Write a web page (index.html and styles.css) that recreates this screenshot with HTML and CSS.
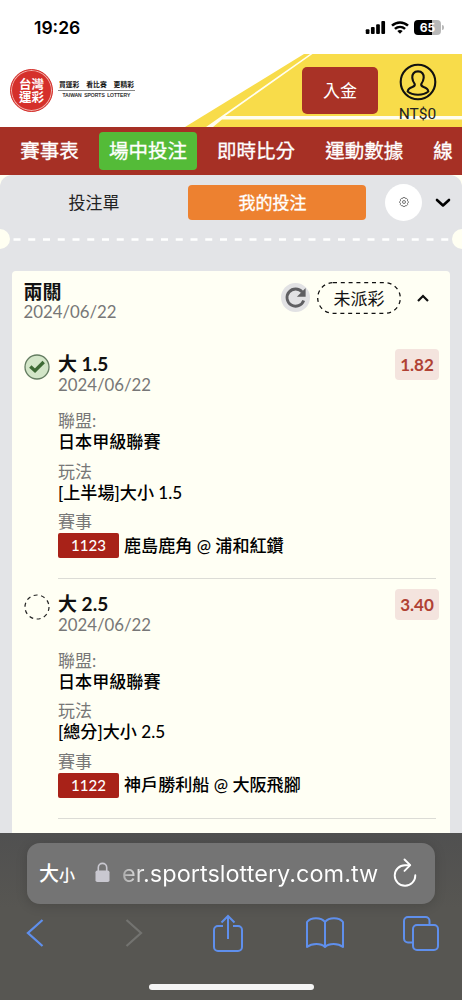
FILE: index.html
```html
<!DOCTYPE html>
<html lang="zh-Hant">
<head>
    <meta charset="UTF-8">
    <meta name="viewport" content="width=device-width, initial-scale=1.0">
    <title>台灣運彩</title>
    <link rel="stylesheet" href="styles.css">
</head>
<body>
    <!-- Phone status bar -->
    <div class="status-bar">
        <span class="clock">19:26</span>
        <div class="status-icons">
            <svg width="21" height="13" viewBox="0 0 21 14">
                <rect x="0" y="9" width="4" height="5" rx="1"/>
                <rect x="5.6" y="6.5" width="4" height="7.5" rx="1"/>
                <rect x="11.2" y="3.5" width="4" height="10.5" rx="1"/>
                <rect x="16.8" y="0" width="4" height="14" rx="1"/>
            </svg>
            <svg width="18" height="13" viewBox="0 0 18 13" fill="none" stroke="#000" stroke-width="2.5">
                <path d="M1 4.6C5.6 .3 12.4 .3 17 4.6"/>
                <path d="M3.9 7.9c3-2.7 7.2-2.7 10.2 0"/>
                <path d="M6.3 10 9 12.8 11.7 10C10.2 8.700 7.800 8.700 6.300 10z" fill="#000" stroke="none"/>
            </svg>
            <div class="battery"><span>65</span></div>
        </div>
    </div>

    <!-- Site header -->
    <header class="site-header">
        <svg class="header-bg" width="462" height="73" viewBox="0 0 462 73">
            <path d="M304 0H462V73H185z" fill="#f8dc4a"/>
            <path d="M310 0H312.500L225 62H462V65.500H222L213 73H206z" fill="#fffef0"/>
        </svg>
        <div class="brand">
            <div class="brand-mark"><span>台灣</span><span>運彩</span></div>
            <div class="brand-text">
                <p class="slogan"><span>買運彩</span><span>看比賽</span><span>更精彩</span></p>
                <p class="brand-en">TAIWAN SPORTS LOTTERY</p>
            </div>
        </div>
        <div class="account">
            <button class="deposit-btn">入金</button>
            <div class="user">
                <svg width="38" height="38" viewBox="0 0 38 38" fill="none" stroke="#111" stroke-width="2.1">
                    <circle cx="19" cy="19" r="17.300"/>
                    <path d="M19 8.400c-4 0-6 2.800-5.700 6.400.2 3 1.300 4.600 2.400 6.200.5 1.600-.6 2.300-2.300 2.900-3.200 1.100-4.600 2.300-4.700 4.600C11.500 31 15 31.700 19 31.700s7.500-.7 10.300-3.200c-.1-2.300-1.500-3.500-4.700-4.600-1.700-.6-2.800-1.300-2.300-2.900 1.100-1.600 2.200-3.200 2.400-6.200.3-3.600-1.700-6.400-5.700-6.400z"/>
                </svg>
                <span class="balance">NT$0</span>
            </div>
        </div>
    </header>

    <nav class="main-nav">
        <a>賽事表</a>
        <a class="active">場中投注</a>
        <a>即時比分</a>
        <a>運動數據</a>
        <a>線</a>
    </nav>

    <main class="bets-page">
        <div class="bets-panel">
            <div class="tabs">
                <span class="tab">投注單</span>
                <span class="tab selected">我的投注</span>
                <span class="settings">
                    <svg width="10" height="10" viewBox="0 0 10 10" fill="none" stroke="#555" stroke-width=".8">
                        <path d="M3.900.6h2.200l.4 1 1.100-.2 1.100 1.400-.3 1.100 1 .7v1l-1 .7.3 1.100-1.100 1.300-1.100-.2-.4.900H3.900l-.4-.9-1.100.2-1.100-1.300.3-1.100-1-.7v-1l1-.7-.3-1.100 1.100-1.400 1.100.2z"/>
                        <circle cx="5" cy="5" r="1.500"/>
                    </svg>
                </span>
                <svg class="chevron" width="16" height="10" viewBox="0 0 16 10" fill="none" stroke="#000" stroke-width="2.600" stroke-linecap="round" stroke-linejoin="round">
                    <path d="M2 2l6 5.500L14 2"/>
                </svg>
            </div>

            <!-- Ticket tear line -->
            <div class="tear">
                <svg width="462" height="20" viewBox="0 0 462 20">
                    <circle cx="0" cy="10" r="10" fill="#fffff2"/>
                    <circle cx="462" cy="10" r="10" fill="#fffff2"/>
                    <path d="M13.500 10.500H451" stroke="#fff" stroke-width="2.600" stroke-dasharray="7 7.750"/>
                </svg>
            </div>

            <section class="ticket">
                <div class="ticket-head">
                    <div class="ticket-name">
                        <h2>兩關</h2>
                        <p class="date">2024/06/22</p>
                    </div>
                    <div class="ticket-state">
                        <svg width="29" height="29" viewBox="0 0 29 29">
                            <circle cx="14.500" cy="14.500" r="14.500" fill="#e2e2e4"/>
                            <path d="M21.300 9.200A8.600 8.600 0 1 0 22.700 17.500" fill="none" stroke="#5f5f62" stroke-width="2.800"/>
                            <path d="M24.600 5v8.700h-8.700z" fill="#5f5f62"/>
                        </svg>
                        <span class="pill">
                            <svg width="84" height="32" viewBox="0 0 84 32">
                                <rect x=".7" y=".7" width="82.600" height="30.600" rx="15.300" fill="none" stroke="#111" stroke-width="1.300" stroke-dasharray="4 3.800"/>
                            </svg>
                            未派彩
                        </span>
                        <svg class="fold" width="12" height="8" viewBox="0 0 12 8" fill="none" stroke="#111" stroke-width="2.200">
                            <path d="M1 7l5-5 5 5"/>
                        </svg>
                    </div>
                </div>

                <article class="leg">
                    <svg class="leg-icon" width="26" height="26" viewBox="0 0 26 26">
                        <circle cx="13" cy="13" r="12" fill="#d3e6c8" stroke="#647d61" stroke-width="1.300"/>
                        <path d="M6.300 12.500l4.700 4.200 8.700-8.700" fill="none" stroke="#3d6a34" stroke-width="3.400"/>
                    </svg>
                    <div class="leg-body">
                        <div class="leg-top">
                            <div>
                                <h3>大 1.5</h3>
                                <p class="date">2024/06/22</p>
                            </div>
                            <span class="odds">1.82</span>
                        </div>
                        <dl>
                            <dt>聯盟:</dt>
                            <dd>日本甲級聯賽</dd>
                            <dt>玩法</dt>
                            <dd>[上半場]大小 1.5</dd>
                            <dt>賽事</dt>
                            <dd class="match"><span class="code">1123</span>鹿島鹿角 @ 浦和紅鑽</dd>
                        </dl>
                    </div>
                </article>

                <article class="leg">
                    <svg class="leg-icon" width="26" height="26" viewBox="0 0 26 26">
                        <circle cx="13" cy="13" r="12" fill="none" stroke="#222" stroke-width="1.200" stroke-dasharray="4 3.540"/>
                    </svg>
                    <div class="leg-body">
                        <div class="leg-top">
                            <div>
                                <h3>大 2.5</h3>
                                <p class="date">2024/06/22</p>
                            </div>
                            <span class="odds">3.40</span>
                        </div>
                        <dl>
                            <dt>聯盟:</dt>
                            <dd>日本甲級聯賽</dd>
                            <dt>玩法</dt>
                            <dd>[總分]大小 2.5</dd>
                            <dt>賽事</dt>
                            <dd class="match"><span class="code">1122</span>神戶勝利船 @ 大阪飛腳</dd>
                        </dl>
                    </div>
                </article>
            </section>
        </div>
    </main>

    <!-- Browser toolbar -->
    <footer class="browser-bar">
        <div class="address">
            <span class="text-size">大<small>小</small></span>
            <svg class="lock" width="15" height="20" viewBox="0 0 15 20">
                <path d="M3.300 9V5.600a4.200 4.200 0 0 1 8.400 0V9" fill="none" stroke="#c9c8d0" stroke-width="1.600"/>
                <rect x=".5" y="8.500" width="14" height="11.500" rx="1.800" fill="#c9c8d0"/>
            </svg>
            <span class="url">er.sportslottery.com.tw</span>
            <svg class="reload" width="24" height="29" viewBox="0 0 24 29" fill="none" stroke="#fff" stroke-width="1.900" stroke-linecap="round" stroke-linejoin="round">
                <path d="M16.800 7.200H12A10.300 10.300 0 1 0 22.300 17.300"/>
                <path d="M11.500 1.500l5.700 5.700-5.700 5.700"/>
            </svg>
        </div>
        <div class="tools">
            <svg width="18" height="28" viewBox="0 0 18 28" fill="none" stroke="#5f8fec" stroke-width="2.300">
                <path d="M16.500 1L2 14l14.500 13"/>
            </svg>
            <svg class="forward" width="18" height="28" viewBox="0 0 18 28" fill="none" stroke="#737370" stroke-width="2.200">
                <path d="M1.500 1L16 14 1.500 27"/>
            </svg>
            <svg width="30" height="38" viewBox="0 0 30 38" fill="none" stroke="#5f8fec" stroke-width="2">
                <path d="M10 12H5a4 4 0 0 0-4 4v17a4 4 0 0 0 4 4h20a4 4 0 0 0 4-4V16a4 4 0 0 0-4-4h-5M15 25V2M8.500 8.500L15 2l6.500 6.500"/>
            </svg>
            <svg width="38" height="32" viewBox="0 0 38 32" fill="none" stroke="#5f8fec" stroke-width="2" stroke-linejoin="round">
                <path d="M19 5c-4-5-14-5-18 0v25c5-4 14-4 18 0V5zM19 5c4-5 14-5 18 0v25c-5-4-14-4-18 0"/>
            </svg>
            <svg width="36" height="35" viewBox="0 0 36 35" fill="none" stroke="#5f8fec" stroke-width="2">
                <rect x="10" y="9" width="25" height="25" rx="4"/>
                <path d="M10 26.500H5a4 4 0 0 1-4-4V5a4 4 0 0 1 4-4h17.500a4 4 0 0 1 4 4v4"/>
            </svg>
        </div>
        <div class="home-bar"></div>
    </footer>
</body>
</html>
```

FILE: styles.css
```css
* {
    box-sizing: border-box;
}

body {
    margin: 0;
    width: 462px;
    height: 1000px;
    overflow: hidden;
    display: flex;
    flex-direction: column;
    background-color: #fff;
    color: #111;
    font-family: Lato, "Noto Sans CJK TC", sans-serif;
    font-size: 17px;
}

h2, h3, p, dl, dd {
    margin: 0;
}

svg {
    display: block;
    flex: none;
}

/* Status bar */
.status-bar {
    flex: none;
    height: 54px;
    padding: 1px 20px 0 34px;
    display: flex;
    align-items: center;
    justify-content: space-between;
}

.clock {
    font: 600 17.5px/20px Inter, sans-serif;
    color: #000;
}

.status-icons {
    display: flex;
    align-items: center;
    gap: 5px;
}

.battery {
    position: relative;
    width: 27px;
    height: 15px;
    margin-right: 1px;
    border-radius: 4px;
    background: linear-gradient(90deg, #000 65%, #b8b8b8 65%);
    color: #fff;
    font: 700 12px/15px Inter, sans-serif;
    text-align: center;
}

.battery::after {
    content: "";
    position: absolute; /* battery tip */
    right: -3px;
    top: 5px;
    width: 2px;
    height: 5px;
    border-radius: 0 2px 2px 0;
    background-color: #b8b8b8;
}

/* Header */
.site-header {
    position: relative;
    flex: none;
    height: 73px;
    display: flex;
    justify-content: space-between;
}

.header-bg {
    position: absolute; /* sits behind the header content */
    left: 0;
    top: 0;
    z-index: -1;
}

.brand {
    display: flex;
    align-items: center;
    gap: 5px;
    padding-left: 10px;
}

.brand-mark {
    width: 43px;
    height: 43px;
    border: 1px solid #d5302b;
    border-radius: 50%;
    background-color: #d5302b;
    box-shadow: inset 0 0 0 1px #f2b2ac;
    color: #fff;
    font-size: 12.5px;
    font-weight: 700;
    line-height: 13px;
    display: flex;
    flex-direction: column;
    align-items: center;
    justify-content: center;
}

.brand-text {
    width: 77px;
    margin-top: -2px;
    color: #111;
}

.slogan {
    display: flex;
    justify-content: space-between;
    padding: 0 1px;
    border-bottom: 1px solid #888;
    font-size: 6.8px;
    font-weight: 700;
    line-height: 12px;
}

.brand-en {
    font: 4.9px/10px "Liberation Sans", sans-serif;
    text-align: center;
    letter-spacing: 0.1px;
    word-spacing: 1px;
    white-space: nowrap;
    -webkit-text-stroke: 0.15px #111;
}

.account {
    display: flex;
    align-items: flex-start;
    gap: 17px;
    padding: 13px 23px 0 0;
}

.deposit-btn {
    width: 76px;
    height: 47px;
    margin-right: 1px;
    border: none;
    border-radius: 5px;
    background-color: #a93226;
    color: #fff;
    font-family: inherit;
    font-size: 17px;
    padding: 0 0 2px;
}

.user {
    width: 43px;
    margin-top: -4px;
    display: flex;
    flex-direction: column;
    align-items: center;
}

.balance {
    margin-top: 4px;
    font: 15.5px/18px Roboto, sans-serif;
    color: #222;
}

/* Main navigation */
.main-nav {
    flex: none;
    height: 48px;
    padding-left: 10px;
    display: flex;
    align-items: center;
    gap: 9.5px;
    overflow: hidden;
    background-color: #a63025;
}

.main-nav a {
    flex: none;
    height: 38px;
    padding: 0 10.3px;
    border-radius: 4px;
    color: #fff;
    font-size: 19.5px;
    line-height: 38px;
    white-space: nowrap;
    -webkit-text-stroke: 0.3px #fff;
}

.main-nav .active {
    background-color: #54bb38;
}

/* Bets */
.bets-page {
    flex: none;
    height: 658px;
    overflow: hidden;
    background-color: #fffff2;
}

.bets-panel {
    height: 100%;
    border-radius: 12px 12px 0 0;
    background-color: #e3e4e7;
}

.tabs {
    height: 54px;
    padding: 0 11px 0 0;
    display: flex;
    align-items: center;
}

.tab {
    width: 188px;
    height: 35px;
    border-radius: 4px;
    font-size: 17px;
    line-height: 35px;
    text-align: center;
    color: #222;
}

.tab.selected {
    width: 178px;
    background-color: #ed8130;
    color: #fff;
    text-indent: -9px;
    -webkit-text-stroke: 0.3px #fff;
}

.settings {
    width: 37px;
    height: 37px;
    margin-left: 19px;
    border-radius: 50%;
    background-color: #fff;
    display: flex;
    align-items: center;
    justify-content: center;
}

.chevron {
    margin: 2px 0 0 13px;
}

.tear {
    height: 42px;
}

.ticket {
    height: 600px;
    margin: 0 12px;
    padding: 10px 12px 0 11.5px;
    border-radius: 4px;
    background-color: #fffff4;
}

.ticket-head {
    height: 71px;
    display: flex;
    justify-content: space-between;
    align-items: flex-start;
}

.ticket-name h2 {
    font-size: 19px;
    line-height: 21px;
    font-weight: 700;
}

.date {
    color: #777;
    font-size: 16.8px;
    line-height: 20px;
}

.ticket-state {
    display: flex;
    align-items: center;
    margin-right: 9px;
}

.pill {
    position: relative;
    width: 84px;
    height: 32px;
    margin: 1px 16px 0 7px;
    font-size: 17px;
    line-height: 33px;
    text-align: center;
}

.pill svg {
    position: absolute; /* dashed outline around the label */
    left: 0;
    top: 0;
}

.leg {
    height: 239.5px;
    display: flex;
    gap: 8.5px;
}

.leg-icon {
    margin-top: 2px;
}

.leg-body {
    flex: 1;
    height: 227px;
    margin-right: 2px;
    border-bottom: 1px solid #dcdcd6;
}

.leg-top {
    display: flex;
    justify-content: space-between;
    margin: 0 -3px 15px 0;
}

.leg h3 {
    padding-top: 1px;
    font-size: 19px;
    line-height: 22px;
    font-weight: 700;
}

.odds {
    width: 44px;
    height: 31px;
    margin-top: -3px;
    border-radius: 4px;
    background-color: #f4e4de;
    color: #b04134;
    font-size: 17px;
    font-weight: 700;
    line-height: 31px;
    text-align: center;
}

dt {
    color: #777;
    font-size: 17px;
    line-height: 22px;
}

dd {
    height: 20px;
    margin-bottom: 8.5px;
    color: #000;
    font-size: 17.1px;
    font-weight: 500;
    line-height: 20px;
}

.match {
    height: 25px;
    display: flex;
    align-items: center;
    gap: 5px;
}

.code {
    width: 61px;
    height: 25px;
    border-radius: 2px;
    background-color: #a82218;
    color: #fff;
    font-size: 15px;
    line-height: 25px;
    text-align: center;
}

/* Browser toolbar */
.browser-bar {
    flex: none;
    height: 167px;
    padding-top: 10px;
    display: flex;
    flex-direction: column;
    align-items: center;
    background: linear-gradient(#505050, #575652 45%);
}

.address {
    width: 408px;
    height: 61px;
    padding: 0 18px 0 12px;
    border-radius: 13px;
    background-color: #747474;
    box-shadow: 0 2px 12px rgba(0, 0, 0, 0.15);
    color: #fff;
    display: flex;
    align-items: center;
}

.text-size {
    font-size: 20px;
    font-weight: 500;
    line-height: 28px;
}

.text-size small {
    font-size: 16px;
}

.lock {
    margin: -3px 12px 0 20px;
}

.url {
    flex: 1;
    font: 23.5px/30px Inter, "Liberation Sans", sans-serif;
    white-space: nowrap;
    background: linear-gradient(90deg, #aaa, #fff 26px);
    -webkit-background-clip: text;
    color: transparent;
}

.reload {
    margin-top: -2px;
}

.tools {
    width: 100%;
    height: 58px;
    padding: 0 22px 0 16px;
    display: grid;
    grid-template-columns: repeat(5, 38px);
    align-items: center;
    justify-items: center;
    justify-content: space-between;
}

.tools .forward {
    margin-left: 4px;
}

.home-bar {
    width: 165px;
    height: 6px;
    margin-top: 22px;
    border-radius: 3px;
    background-color: #f5f5f5;
}
```
